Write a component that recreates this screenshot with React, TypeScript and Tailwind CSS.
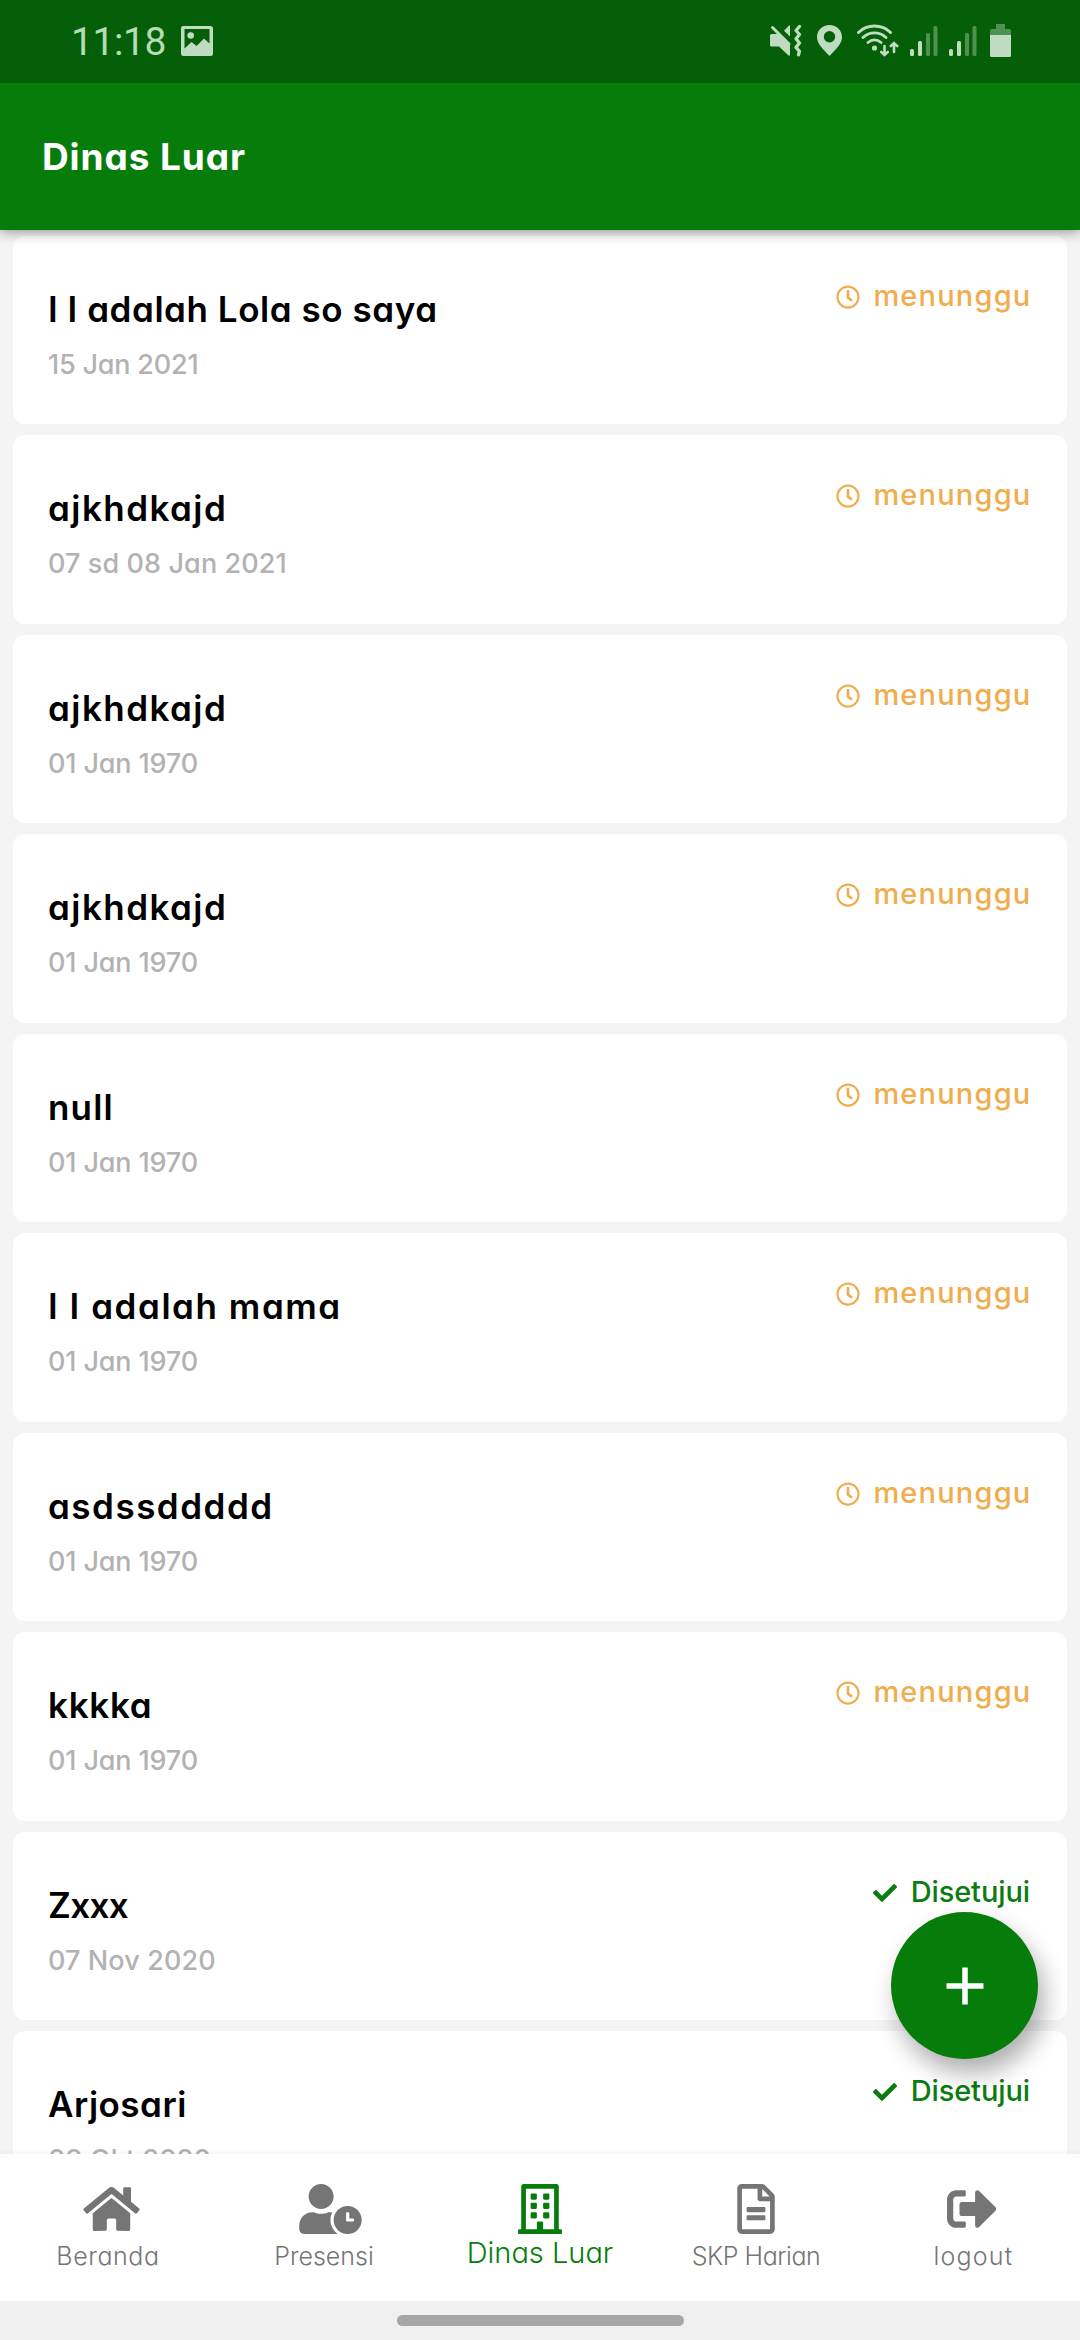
import React from 'react';
import {
  FaCheck,
  FaHome,
  FaRegBuilding,
  FaRegClock,
  FaRegFileAlt,
  FaSignOutAlt,
  FaUserClock,
} from 'react-icons/fa';

const items = [
  { title: 'I I adalah Lola so saya', date: '15 Jan 2021', approved: false, titleClass: 'tracking-[0.55px]', dateClass: 'tracking-[-0.2px]' },
  { title: 'ajkhdkajd', date: '07 sd 08 Jan 2021', approved: false, titleClass: 'tracking-[1.45px]', dateClass: 'tracking-[0.1px]' },
  { title: 'ajkhdkajd', date: '01 Jan 1970', approved: false, titleClass: 'tracking-[1.45px]', dateClass: 'tracking-[-0.15px]' },
  { title: 'ajkhdkajd', date: '01 Jan 1970', approved: false, titleClass: 'tracking-[1.45px]', dateClass: 'tracking-[-0.15px]' },
  { title: 'null', date: '01 Jan 1970', approved: false, titleClass: 'tracking-[1.2px]', dateClass: 'tracking-[-0.15px]' },
  { title: 'I I adalah mama', date: '01 Jan 1970', approved: false, titleClass: 'tracking-[1.55px]', dateClass: 'tracking-[-0.15px]' },
  { title: 'asdssddddd', date: '01 Jan 1970', approved: false, titleClass: 'tracking-[1.5px]', dateClass: 'tracking-[-0.15px]' },
  { title: 'kkkka', date: '01 Jan 1970', approved: false, titleClass: 'tracking-[0.7px]', dateClass: 'tracking-[-0.15px]' },
  { title: 'Zxxx', date: '07 Nov 2020', approved: true, titleClass: 'tracking-[-0.6px]', dateClass: 'tracking-[0.1px]' },
  { title: 'Arjosari', date: '09 Okt 2020', approved: true, titleClass: 'tracking-[0.5px]', dateClass: 'tracking-[0.1px]' },
];

const Signal = () => (
  <svg width="28" height="32" viewBox="0 0 28 32" fill="#c0dcc0">
    <rect x="0" y="25" width="4" height="7" rx="1.5" />
    <rect x="8" y="17" width="4" height="15" rx="1.5" />
    <rect x="16" y="9" width="4" height="23" rx="1.5" opacity=".4" />
    <rect x="23.5" y="2" width="4" height="30" rx="1.5" opacity=".4" />
  </svg>
);

const StatusBar = () => (
  <div className="relative z-20 flex h-[83px] shrink-0 items-start justify-between bg-[#045f08] pl-[71px] pr-[68px] pt-6">
    <div className="flex">
      <span className="w-[94px] whitespace-nowrap font-[Roboto] text-[39px] font-normal leading-[37px] tracking-[-0.4px] text-[#b5dcb5]">
        11:18
      </span>
      <svg className="ml-4 mt-0.5" width="32" height="30" viewBox="0 0 32 30">
        <path
          fill="#c0dcc0"
          fillRule="evenodd"
          d="M2.5 0h27A2.5 2.5 0 0 1 32 2.5v25a2.5 2.5 0 0 1-2.5 2.5h-27A2.5 2.5 0 0 1 0 27.5v-25A2.5 2.5 0 0 1 2.5 0zM3.5 3v19.500l7-6.500 5 4 7.500-7.500 5.500 5V3z"
        />
        <circle cx="9.700" cy="9.500" r="3.300" fill="#c0dcc0" />
      </svg>
    </div>
    <div className="flex text-[#c0dcc0]">
      {/* muted / vibrate */}
      <svg width="32" height="33" viewBox="0 0 32 33" fill="currentColor">
        <path d="M1.500 10H8l12 11V31.500h-1.500L9 22.500H1.500A1.500 1.500 0 0 1 0 21V11.500A1.500 1.500 0 0 1 1.500 10z" />
        <path d="M14 6.800 19 1.500h1v11z" />
        <path d="M2.500 3.500 19 20" stroke="currentColor" strokeWidth="3" strokeLinecap="round" />
        <path
          d="M29.500 2.500 26 6.500l3.500 4-3.500 4.300 3.500 4.200-3.500 4.300 3.500 4-1 3.500"
          fill="none"
          stroke="currentColor"
          strokeWidth="3.300"
          strokeLinecap="round"
          strokeLinejoin="round"
        />
      </svg>
      <svg className="ml-[15px]" width="25" height="32" viewBox="0 0 25 32" fill="currentColor">
        <path fillRule="evenodd" d="M12.500 1C5.600 1 0 6.400 0 13c0 7 6 12 12.500 19C19 25 25 20 25 13 25 6.400 19.400 1 12.500 1zm0 6a5.700 5.700 0 1 1 0 11.400 5.700 5.700 0 0 1 0-11.400z" />
      </svg>
      <svg className="ml-[15px]" width="42" height="33" viewBox="0 0 42 33" fill="none" stroke="currentColor" strokeWidth="2.900" strokeLinecap="round">
        <path d="M1.500 8.500C10-.1 25-.1 33.500 8.500M6 13.500c6.500-6.200 16.500-6.200 23 0M11 18.500c4-3.500 9-3.500 13 0" />
        <circle cx="17.500" cy="24" r="2.600" fill="currentColor" stroke="none" />
        <path d="M27.500 22v9M24.300 28l3.200 3 3.200-3M37 28v-9M33.800 22l3.200-3 3.200 3" strokeWidth="2.600" />
      </svg>
      <div className="ml-[11px]">
        <Signal />
      </div>
      <div className="ml-[11px]">
        <Signal />
      </div>
      <svg className="ml-[13px]" width="22" height="33" viewBox="0 0 22 33" fill="currentColor">
        <path d="M6 0h9v5h4.500A1.500 1.500 0 0 1 21 6.500V11H0V6.500A1.500 1.500 0 0 1 1.500 5H6z" opacity=".4" />
        <path d="M0 11h21v20.500a1.500 1.500 0 0 1-1.500 1.500h-18A1.500 1.500 0 0 1 0 31.500z" />
      </svg>
    </div>
  </div>
);

const Status = ({ approved }: { approved: boolean }) =>
  approved ? (
    <div className="mt-[42px] flex h-9 items-center text-[29px] font-medium leading-9 text-[#0a7c10]">
      <FaCheck className="mr-[14px] mt-0.5 size-[24px]" />
      <span className="tracking-[-0.1px]">Disetujui</span>
    </div>
  ) : (
    <div className="-mr-[1.5px] mt-[42px] flex h-9 items-center text-[29px] font-medium leading-9 text-[#f0ad4e]">
      <FaRegClock className="mr-[13px] mt-0.5 size-[24px]" />
      <span className="tracking-[1.2px]">menunggu</span>
    </div>
  );

const tabs = [
  { label: 'Beranda', icon: <FaHome className="h-[50px] w-[57px] shrink-0" />, labelClass: 'tracking-[0.6px]' },
  { label: 'Presensi', icon: <FaUserClock className="h-[50px] w-[63px] shrink-0" />, labelClass: '' },
  { label: 'Dinas Luar', icon: <FaRegBuilding className="mx-auto h-[50px] w-[44px]" />, labelClass: '', active: true },
  { label: 'SKP Harian', icon: <FaRegFileAlt className="mx-auto h-[50px] w-[38px]" />, labelClass: 'tracking-[-0.45px]' },
  { label: 'logout', icon: <FaSignOutAlt className="size-[50px]" />, labelClass: 'pl-[3px] tracking-[1.2px]' },
];

export default function App() {
  return (
    <div className="relative flex h-[2340px] w-[1080px] flex-col overflow-hidden bg-[#f4f4f4] font-[Inter,sans-serif] [font-feature-settings:'cv11']">
      <StatusBar />
      <header className="z-10 flex h-[147px] shrink-0 items-center bg-[#067d0b] pl-[42px] shadow-[0_2px_12px_rgba(0,0,0,0.4)]">
        <h1 className="text-[37px] font-bold leading-[40px] tracking-[0.9px] text-white">Dinas Luar</h1>
      </header>

      <main className="flex min-h-0 flex-1 flex-col gap-[11px] overflow-hidden px-[13px] pt-[5.5px]">
        {items.map((item, i) => (
          <div key={i} className="flex h-[188.5px] shrink-0 justify-between rounded-[12px] bg-white pl-[35px] pr-[37px]">
            <div className="pt-[53px]">
              <div className={`text-[35px] font-semibold leading-10 text-black ${item.titleClass}`}>{item.title}</div>
              <div className={`mt-[18px] text-[27px] font-medium leading-9 text-[#b2b2b2] ${item.dateClass}`}>{item.date}</div>
            </div>
            <Status approved={item.approved} />
          </div>
        ))}
      </main>

      <nav className="z-10 grid h-[147px] shrink-0 grid-cols-5 bg-white shadow-[0_0_6px_rgba(0,0,0,0.08)]">
        {tabs.map((tab) => (
          <div key={tab.label} className={`flex flex-col items-center pt-[30px] ${tab.active ? 'text-[#067d0b]' : 'text-[#757575]'}`}>
            <div className="flex w-[50px]">{tab.icon}</div>
            <span className={`whitespace-nowrap font-light ${tab.active ? 'mt-px text-[29px] leading-9' : 'mt-1 text-[25px] leading-9'} ${tab.labelClass}`}>
              {tab.label}
            </span>
          </div>
        ))}
      </nav>
      <div className="z-10 flex h-[39px] shrink-0 justify-center bg-[#f0f0f0] pt-[14px]">
        <div className="h-[11px] w-[287px] rounded-full bg-[#a6a6a6]" />
      </div>

      <button className="absolute left-[891px] top-[1912px] flex size-[147px] items-center justify-center rounded-full bg-[#067d0b] shadow-[6px_14px_24px_rgba(0,0,0,0.32)]">
        <svg width="38" height="38" viewBox="0 0 38 38" stroke="#fff" strokeWidth="5.500">
          <path d="M19 .5v37M.5 19h37" />
        </svg>
      </button>
    </div>
  );
}
